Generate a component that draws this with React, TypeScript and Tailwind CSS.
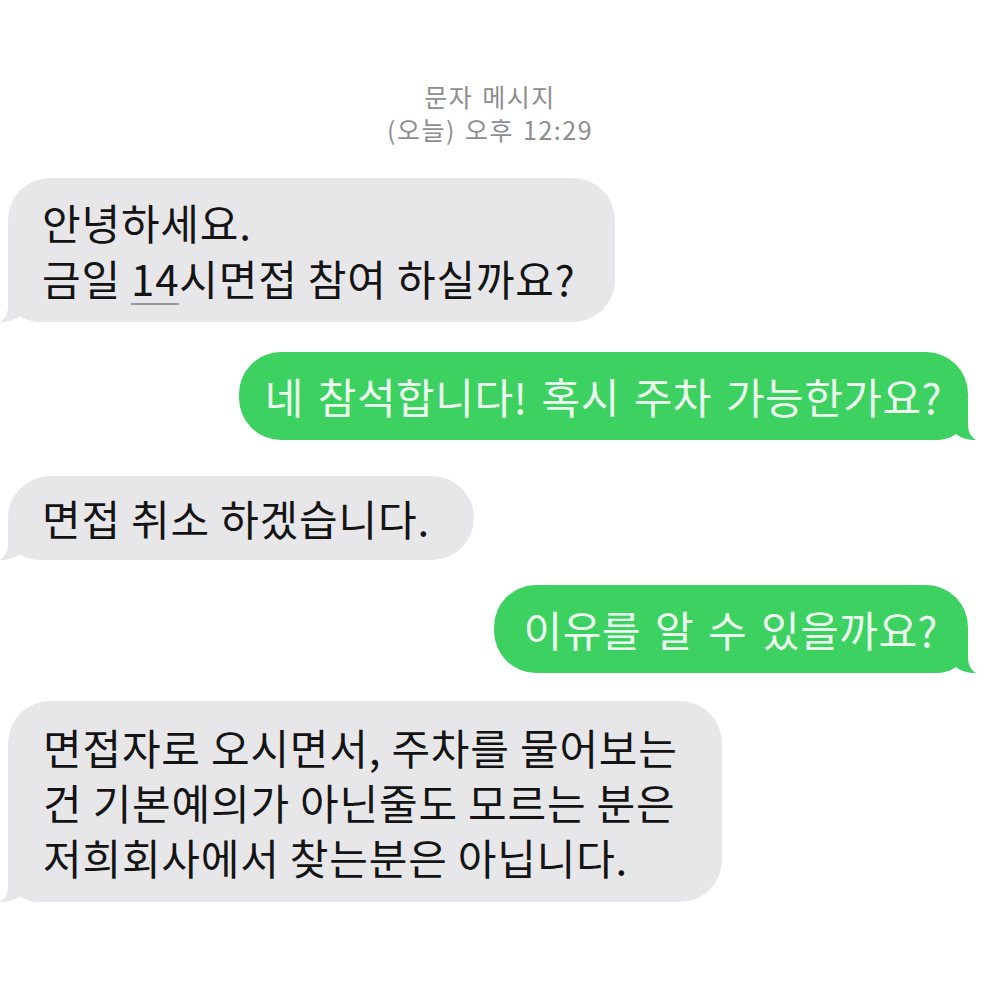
import React from 'react';

const font = { fontFamily: '"Noto Sans CJK KR", "Noto Sans", sans-serif' };

function Tail({ color, side }: { color: string; side: 'left' | 'right' }) {
  return (
    <svg
      width="56"
      height="40"
      viewBox="0 0 56 40"
      className={`absolute bottom-0 ${side === 'left' ? '-left-2' : '-right-2 -scale-x-100'}`}
    >
      <path d="M8 0 L8 24 C8 32 5 37 0 40 C8 40 15 38 20 34 C26 38 32 40 42 40 L56 40 L56 0 Z" fill={color} />
    </svg>
  );
}

function Incoming({ children, className = '' }: { children: React.ReactNode; className?: string }) {
  return (
    <div className={`relative self-start ml-2 ${className}`}>
      <Tail color="#e7e7ea" side="left" />
      <div className="relative rounded-[42px] bg-[#e7e7ea] text-[#141414] text-[42px] leading-[56px] tracking-[0.8px]">
        {children}
      </div>
    </div>
  );
}

function Outgoing({ children, className = '' }: { children: React.ReactNode; className?: string }) {
  return (
    <div className={`relative self-end ${className}`}>
      <Tail color="#3cd160" side="right" />
      <div className="relative rounded-[42px] bg-[#3cd160] text-[#ecffee] text-[42px] leading-[56px] tracking-[0.5px]">
        {children}
      </div>
    </div>
  );
}

export default function App() {
  return (
    <div className="w-[1000px] h-[990px] bg-white flex flex-col overflow-hidden" style={font}>
      <div className="pt-[80px] pr-[20px] flex flex-col items-center text-[#8d8d92] text-[25px] leading-[33px] tracking-[1.5px] [word-spacing:2px]">
        <p>문자 메시지</p>
        <p>(오늘) 오후 12:29</p>
      </div>

      <Incoming className="mt-[32px]">
        <div className="pl-[34px] pr-[40px] py-4">
          <p>안녕하세요.</p>
          <p>
            금일 <span className="underline decoration-[#9a9a9a] decoration-2 underline-offset-[7px]">14</span>시면접 참여 하실까요?
          </p>
        </div>
      </Incoming>

      <Outgoing className="mt-[30px] mr-[32px]">
        <div className="pl-[26px] pr-[26px] py-4 [word-spacing:4px]">네 참석합니다! 혹시 주차 가능한가요?</div>
      </Outgoing>

      <Incoming className="mt-[36px]">
        <div className="pl-[34px] pr-[44px] py-[14px]">면접 취소 하겠습니다.</div>
      </Incoming>

      <Outgoing className="mt-[25px] mr-[32px]">
        <div className="pl-[30px] pr-[30px] py-4 [word-spacing:4px]">이유를 알 수 있을까요?</div>
      </Outgoing>

      <Incoming className="mt-[28px]">
        <div className="pl-[35px] pr-[44px] py-[18px] leading-[55px]">
          <p>면접자로 오시면서, 주차를 물어보는</p>
          <p>건 기본예의가 아닌줄도 모르는 분은</p>
          <p>저희회사에서 찾는분은 아닙니다.</p>
        </div>
      </Incoming>
    </div>
  );
}
